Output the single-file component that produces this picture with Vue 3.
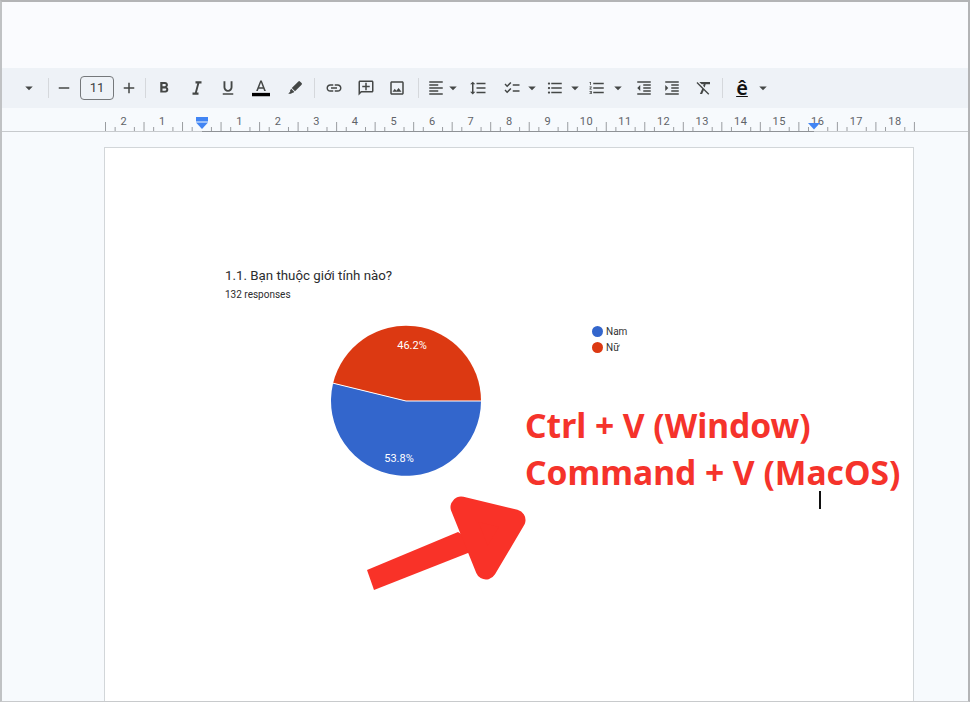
<script setup>
import { computed } from 'vue'

// Iconos material (viewBox 24)
const iconos = {
  caret: 'M7 10l5 5 5-5z',
  menos: 'M19 13H5v-2h14v2z',
  mas: 'M19 13h-6v6h-2v-6H5v-2h6V5h2v6h6v2z',
  bold: 'M15.6 10.79c.97-.67 1.65-1.77 1.65-2.79 0-2.26-1.75-4-4-4H7v14h7.04c2.09 0 3.71-1.7 3.71-3.79 0-1.52-.86-2.82-2.15-3.42zM10 6.5h3c.83 0 1.5.67 1.5 1.5s-.67 1.5-1.5 1.5h-3v-3zm3.5 9H10v-3h3.5c.83 0 1.5.67 1.5 1.5s-.67 1.5-1.5 1.5z',
  italic: 'M10 3v3h2.4l-3.2 12H6v3h8v-3h-2.2l3.2-12H18V3z',
  underline: 'M12 17c3.31 0 6-2.69 6-6V3h-2.5v8c0 1.93-1.57 3.5-3.5 3.5S8.5 12.93 8.5 11V3H6v8c0 3.31 2.69 6 6 6zm-7 2v2h14v-2H5z',
  color: 'M11 2 5.5 16h2.25l1.12-3h6.25l1.12 3h2.25L13 2h-2zM9.62 11 12 4.67 14.38 11H9.62z',
  pen: 'M16.5 3.2a1.5 1.5 0 0 1 2.1 0l2.2 2.2a1.5 1.5 0 0 1 0 2.1L12 16.3 7.7 12zM6.9 13l4.1 4.1-1.7 1.6-1.2-.4-1.2 1.2H3l2.7-2.7-.4-1.2z',
  link: 'M3.9 12c0-1.71 1.39-3.1 3.1-3.1h4V7H7c-2.76 0-5 2.24-5 5s2.24 5 5 5h4v-1.9H7c-1.71 0-3.1-1.39-3.1-3.1zM8 13h8v-2H8v2zm9-6h-4v1.9h4c1.71 0 3.1 1.39 3.1 3.1s-1.39 3.1-3.1 3.1h-4V17h4c2.76 0 5-2.24 5-5s-2.24-5-5-5z',
  comentario: 'M20 2H4c-1.1 0-2 .9-2 2v18l4-4h14c1.1 0 2-.9 2-2V4c0-1.1-.9-2-2-2zm0 14H5.17L4 17.17V4h16v12zM13 5h-2v4H7v2h4v4h2v-4h4V9h-4z',
  imagen: 'M19 5v14H5V5h14m0-2H5c-1.1 0-2 .9-2 2v14c0 1.1.9 2 2 2h14c1.1 0 2-.9 2-2V5c0-1.1-.9-2-2-2zm-4.86 8.86l-3 3.87L9 13.14 6 17h12l-3.86-5.14z',
  alinear: 'M15 15H3v2h12v-2zm0-8H3v2h12V7zM3 13h18v-2H3v2zm0 8h18v-2H3v2zM3 3v2h18V3H3z',
  interlineado: 'M6 7h2.5L5 3.5 1.5 7H4v10H1.5L5 20.5 8.5 17H6V7zm4-2v2h12V5H10zm0 14h12v-2H10v2zm0-6h12v-2H10v2z',
  checklist: 'M22 7h-9v2h9V7zm0 8h-9v2h9v-2zM5.54 11 2 7.46l1.41-1.41 2.12 2.12 4.24-4.24 1.41 1.41L5.54 11zm0 8L2 15.46l1.41-1.41 2.12 2.12 4.24-4.24 1.41 1.41L5.54 19z',
  vinetas: 'M4 10.5c-.83 0-1.5.67-1.5 1.5s.67 1.5 1.5 1.5 1.5-.67 1.5-1.5-.67-1.5-1.5-1.5zm0-6c-.83 0-1.5.67-1.5 1.5S3.17 7.5 4 7.5 5.5 6.83 5.5 6 4.83 4.5 4 4.5zm0 12c-.83 0-1.5.68-1.5 1.5s.68 1.5 1.5 1.5 1.5-.68 1.5-1.5-.67-1.5-1.5-1.5zM7 19h14v-2H7v2zm0-6h14v-2H7v2zm0-8v2h14V5H7z',
  numeros: 'M2 17h2v.5H3v1h1v.5H2v1h3v-4H2v1zm1-9h1V4H2v1h1v3zm-1 3h1.8L2 13.1v.9h3v-1H3.2L5 10.9V10H2v1zm5-6v2h14V5H7zm0 14h14v-2H7v2zm0-6h14v-2H7v2z',
  outdent: 'M11 17h10v-2H11v2zm-8-5l4 4V8l-4 4zm0 9h18v-2H3v2zM3 3v2h18V3H3zm8 6h10V7H11v2zm0 4h10v-2H11v2z',
  indent: 'M3 21h18v-2H3v2zM3 8v8l4-4-4-4zm8 9h10v-2H11v2zM3 3v2h18V3H3zm8 6h10V7H11v2zm0 4h10v-2H11v2z',
  limpiar: 'M3.27 4L2 5.27l7.6 7.6L6.5 20h3l2.2-5.03L17.73 21 19 19.73 3.55 4.27 3.27 4zM6 4v.18L8.82 7h2.9l-.9 2.1 2.1 2.1L14.2 7H20V4H6z'
}

// tipo + centro horizontal de cada control
const controles = [
  { t: 'icono', i: 'caret', cx: 29 },
  { t: 'sep', cx: 48 },
  { t: 'icono', i: 'menos', cx: 64 },
  { t: 'tamano', cx: 97 },
  { t: 'icono', i: 'mas', cx: 129 },
  { t: 'sep', cx: 145.5 },
  { t: 'icono', i: 'bold', cx: 164 },
  { t: 'icono', i: 'italic', cx: 197 },
  { t: 'icono', i: 'underline', cx: 228 },
  { t: 'color', i: 'color', cx: 261 },
  { t: 'icono', i: 'pen', cx: 295 },
  { t: 'sep', cx: 314 },
  { t: 'icono', i: 'link', cx: 334 },
  { t: 'icono', i: 'comentario', cx: 366 },
  { t: 'icono', i: 'imagen', cx: 397 },
  { t: 'sep', cx: 418 },
  { t: 'icono', i: 'alinear', cx: 436 },
  { t: 'icono', i: 'caret', cx: 453 },
  { t: 'icono', i: 'interlineado', cx: 478 },
  { t: 'icono', i: 'checklist', cx: 512 },
  { t: 'icono', i: 'caret', cx: 532 },
  { t: 'icono', i: 'vinetas', cx: 555 },
  { t: 'icono', i: 'caret', cx: 575 },
  { t: 'icono', i: 'numeros', cx: 597 },
  { t: 'icono', i: 'caret', cx: 618 },
  { t: 'icono', i: 'outdent', cx: 644 },
  { t: 'icono', i: 'indent', cx: 672 },
  { t: 'icono', i: 'limpiar', cx: 704 },
  { t: 'sep', cx: 722.5 },
  { t: 'letra', cx: 742 },
  { t: 'icono', i: 'caret', cx: 763 }
]

const anchos = { icono: 18, sep: 1, tamano: 34, color: 18, letra: 18 }

// margen de cada control a partir del centro deseado
const barra = computed(() => {
  let borde = 0
  return controles.map((c, n) => {
    const w = c.i === 'caret' ? 18 : anchos[c.t]
    const izq = c.cx - w / 2
    const item = { ...c, id: n, estilo: { marginLeft: izq - borde + 'px', width: w + 'px' } }
    borde = izq + w
    return item
  })
})

// Regla: un cuarto de cm = 9.63px, origen en x=201
const paso = 9.63
const marcas = computed(() => {
  const lista = []
  for (let i = 0; i <= 84; i++) {
    if (i % 4 === 2) continue
    lista.push({ x: 105.5 + i * paso, y: i % 4 === 0 ? 122 : 127 })
  }
  return lista
})
const numeros = computed(() => {
  const lista = []
  for (let n = -2; n <= 18; n++) {
    if (n === 0) continue
    lista.push({ x: 201 + n * 38.55, v: Math.abs(n) })
  }
  return lista
})
</script>

<template>
  <div class="ventana">
    <div class="cabecera"></div>

    <div class="barra">
      <template v-for="c in barra" :key="c.id">
        <span v-if="c.t === 'sep'" class="sep" :style="c.estilo"></span>
        <span v-else-if="c.t === 'tamano'" class="tamano" :style="c.estilo">11</span>
        <span v-else-if="c.t === 'letra'" class="letra" :style="c.estilo">ê</span>
        <svg v-else class="icono" :style="c.estilo" height="18" viewBox="0 0 24 24">
          <path :d="iconos[c.i]" />
          <rect v-if="c.t === 'color'" x="0" y="18.5" width="24" height="4.5" fill="#000" />
        </svg>
      </template>
    </div>

    <svg class="regla" width="970" height="24" viewBox="0 108 970 24">
      <line x1="0" y1="131.5" x2="970" y2="131.5" stroke="#c7cacd" />
      <line x1="202" y1="131.5" x2="814" y2="131.5" stroke="#8f9296" />
      <line v-for="m in marcas" :key="m.x" :x1="m.x" :y1="m.y" :x2="m.x" y2="131" stroke="#9a9da1" />
      <text v-for="n in numeros" :key="n.x" :x="n.x" y="125" text-anchor="middle" class="numero">{{ n.v }}</text>
      <rect x="196" y="117" width="12" height="4.5" fill="#4285f4" />
      <path d="M196 122.5h12l-6 6.5z" fill="#4285f4" />
      <path d="M808 123h12l-6 6.5z" fill="#4285f4" />
    </svg>

    <div class="lienzo">
      <div class="pagina">
        <h1 class="titulo">1.1. Bạn thuộc giới tính nào?</h1>
        <p class="respuestas">132 responses</p>

        <div class="grafico">
          <svg class="pastel" width="152" height="152" viewBox="330 325 152 152">
            <path d="M406 401L481 401A75 75 0 1 1 333.1 383.2Z" fill="#3366cc" />
            <path d="M406 401L333.1 383.2A75 75 0 0 1 481 401Z" fill="#dc3912" />
            <path d="M333.1 383.2L406 401L481 401" fill="none" stroke="#fff" stroke-width="1" />
            <text x="412" y="349" text-anchor="middle" class="porcentaje">46.2%</text>
            <text x="399" y="462" text-anchor="middle" class="porcentaje">53.8%</text>
          </svg>
          <ul class="leyenda">
            <li><span class="punto azul"></span>Nam</li>
            <li><span class="punto rojo"></span>Nữ</li>
          </ul>
        </div>

        <!-- Anotaciones encima de la captura -->
        <div class="nota">
          <div>Ctrl + V (Window)</div>
          <div>Command + V (MacOS)</div>
        </div>
        <span class="cursor"></span>
        <svg class="flecha" width="180" height="110" viewBox="360 490 180 110">
          <path d="M367 570L458 532L480 545L468 553L374 590Z" fill="#f93228" />
          <path d="M461 507L515 520L486 569Z" fill="#f93228" stroke="#f93228" stroke-width="21" stroke-linejoin="round" />
        </svg>
      </div>
    </div>
  </div>
</template>

<style scoped>
.ventana {
  width: 970px;
  height: 702px;
  box-sizing: border-box;
  display: flex;
  flex-direction: column;
  overflow: hidden;
  background: #f7fafd;
  border-top: 2px solid #b3b4b6;
  border-left: 2px solid #c0c2c4;
  border-right: 2px solid #b3b4b6;
  border-bottom: 1px solid #c8cacc;
}

.cabecera {
  height: 66px;
  flex-shrink: 0;
  background: #fafbfe;
}

.barra {
  height: 40px;
  flex-shrink: 0;
  margin-left: -2px;
  display: flex;
  align-items: center;
  background: #eef2f7;
}

.sep {
  height: 20px;
  background: #d5d8dc;
  flex-shrink: 0;
}

.tamano {
  box-sizing: border-box;
  height: 24px;
  flex-shrink: 0;
  border: 1px solid #75787b;
  border-radius: 4px;
  font: 13px/22px Roboto, sans-serif;
  text-align: center;
  color: #3c4043;
}

.letra {
  flex-shrink: 0;
  font: 600 20px/22px "Noto Sans", sans-serif;
  text-align: center;
  color: #111;
  text-decoration: underline;
  text-decoration-thickness: 1px;
  text-underline-offset: 1px;
}

.icono {
  flex-shrink: 0;
  fill: #444746;
}

.regla {
  display: block;
  flex-shrink: 0;
  margin-left: -2px;
}

.numero {
  font: 11px Roboto, sans-serif;
  letter-spacing: 0.5px;
  fill: #5f6368;
}

.lienzo {
  flex: 1;
  min-height: 0;
  padding: 15px 0 0 102px;
}

.pagina {
  position: relative;
  box-sizing: border-box;
  width: 810px;
  height: 600px;
  padding: 119px 0 0 120px;
  background: #fff;
  border: 1px solid #d2d6d9;
  font-family: Roboto, sans-serif;
}

.titulo {
  margin: 0;
  font-size: 13.3px;
  font-weight: 400;
  line-height: 18px;
  color: #2b2c2e;
}

.respuestas {
  margin: 3px 0 0;
  font-size: 10px;
  line-height: 14px;
  color: #2b2c2e;
}

.grafico {
  display: flex;
  align-items: flex-start;
  margin: 23px 0 0 105px;
}

.pastel {
  display: block;
  flex-shrink: 0;
}

.porcentaje {
  font: 11px Roboto, sans-serif;
  fill: #fff;
}

.leyenda {
  list-style: none;
  margin: -2px 0 0 110px;
  padding: 0;
  font-size: 10px;
  color: #333;
}

.leyenda li {
  display: flex;
  align-items: center;
  gap: 3px;
  height: 16px;
}

.punto {
  width: 11px;
  height: 11px;
  border-radius: 50%;
}

.azul { background: #3366cc; }
.rojo { background: #dc3912; }

.nota {
  position: absolute;
  left: 420px;
  top: 254px;
  font: 700 33.6px/47px "Noto Sans", sans-serif;
  color: #f5332b;
  white-space: nowrap;
}

.cursor {
  position: absolute;
  left: 714px;
  top: 343px;
  width: 2px;
  height: 18px;
  background: #111;
}

.flecha {
  position: absolute;
  left: 255px;
  top: 342px;
}
</style>

<style>
html, body {
  margin: 0;
  background: #f7fafd;
}
</style>
